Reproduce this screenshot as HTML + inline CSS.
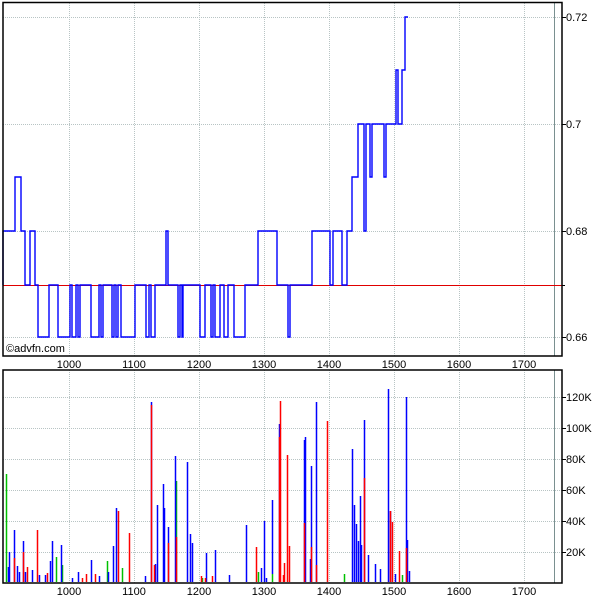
<!DOCTYPE html>
<html><head><meta charset="utf-8"><style>
html,body{margin:0;padding:0;background:#fff;width:600px;height:600px;overflow:hidden}
svg{display:block}
text{font-family:"Liberation Sans",sans-serif;font-size:11px;fill:#000}
</style></head><body>
<svg width="600" height="600" xmlns="http://www.w3.org/2000/svg">
<g stroke="#b8c4c4" stroke-width="1" stroke-dasharray="1,1">
<line x1="69.5" y1="3" x2="69.5" y2="356"/><line x1="134.5" y1="3" x2="134.5" y2="356"/><line x1="199.5" y1="3" x2="199.5" y2="356"/><line x1="264.5" y1="3" x2="264.5" y2="356"/><line x1="329.5" y1="3" x2="329.5" y2="356"/><line x1="394.5" y1="3" x2="394.5" y2="356"/><line x1="459.5" y1="3" x2="459.5" y2="356"/><line x1="524.5" y1="3" x2="524.5" y2="356"/>
<line x1="69.5" y1="370" x2="69.5" y2="583"/><line x1="134.5" y1="370" x2="134.5" y2="583"/><line x1="199.5" y1="370" x2="199.5" y2="583"/><line x1="264.5" y1="370" x2="264.5" y2="583"/><line x1="329.5" y1="370" x2="329.5" y2="583"/><line x1="394.5" y1="370" x2="394.5" y2="583"/><line x1="459.5" y1="370" x2="459.5" y2="583"/><line x1="524.5" y1="370" x2="524.5" y2="583"/>
<line x1="3" y1="17.5" x2="562" y2="17.5"/><line x1="3" y1="124.5" x2="562" y2="124.5"/><line x1="3" y1="231.5" x2="562" y2="231.5"/><line x1="3" y1="337.5" x2="562" y2="337.5"/>
<line x1="3" y1="397.5" x2="562" y2="397.5"/><line x1="3" y1="428.5" x2="562" y2="428.5"/><line x1="3" y1="459.5" x2="562" y2="459.5"/><line x1="3" y1="490.5" x2="562" y2="490.5"/><line x1="3" y1="521.5" x2="562" y2="521.5"/><line x1="3" y1="552.5" x2="562" y2="552.5"/>
</g>
<g stroke="#7a9090" stroke-width="1"><line x1="554.5" y1="3" x2="554.5" y2="356"/><line x1="554.5" y1="370" x2="554.5" y2="583"/></g>
<line x1="3" y1="285.5" x2="562" y2="285.5" stroke="#e00000" stroke-width="1"/>
<path fill="none" stroke="#0000ff" stroke-width="1.4" d="M3,285 V231 H6 V231 H15 V177 H21 V231 H25 V285 H30 V231 H35 V285 H38 V337 H49 V285 H58 V337 H70 V285 H72 V337 H76 V285 H78 V337 H80 V285 H91 V337 H99 V285 H101 V337 H103 V285 H112 V337 H114 V285 H116 V337 H118 V285 H121 V337 H135 V285 H146 V337 H149 V285 H151 V337 H155 V285 H166 V231 H168 V285 H178 V337 H180 V285 H182 V337 H183 V285 H200 V337 H205 V285 H211 V337 H213 V285 H215 V337 H220 V285 H224 V337 H228 V285 H234 V337 H245 V285 H258 V231 H277 V285 H288 V337 H290 V285 H312 V231 H330 V285 H333 V231 H342 V285 H347 V231 H352 V177 H358 V124 H364 V231 H366 V124 H370 V177 H372 V124 H375 V124 H384 V177 H386 V124 H396 V70 H398 V124 H402 V70 H405 V17 H408"/>
<g fill="none" stroke="#000" stroke-width="1.5">
<rect x="3" y="2.5" width="559" height="353.5"/>
<rect x="3" y="370" width="559" height="213"/>
</g>
<g stroke="#000" stroke-width="1">
<line x1="562" y1="17.5" x2="566" y2="17.5"/><line x1="562" y1="124.5" x2="566" y2="124.5"/><line x1="562" y1="231.5" x2="566" y2="231.5"/><line x1="562" y1="285.5" x2="565" y2="285.5"/><line x1="562" y1="337.5" x2="566" y2="337.5"/>
<line x1="562" y1="397.5" x2="566" y2="397.5"/><line x1="562" y1="428.5" x2="566" y2="428.5"/><line x1="562" y1="459.5" x2="566" y2="459.5"/><line x1="562" y1="490.5" x2="566" y2="490.5"/><line x1="562" y1="521.5" x2="566" y2="521.5"/><line x1="562" y1="552.5" x2="566" y2="552.5"/>
</g>
<g>
<text x="566" y="21">0.72</text><text x="566" y="128">0.7</text><text x="566" y="235">0.68</text><text x="566" y="341">0.66</text>
<text x="566" y="401">120K</text><text x="566" y="432">100K</text><text x="566" y="463">80K</text><text x="566" y="494">60K</text><text x="566" y="525">40K</text><text x="566" y="556">20K</text>
<text x="6" y="352" font-size="11">©advfn.com</text>
</g>
<g text-anchor="middle">
<text x="69" y="368">1000</text><text x="134" y="368">1100</text><text x="199" y="368">1200</text><text x="264" y="368">1300</text><text x="329" y="368">1400</text><text x="394" y="368">1500</text><text x="459" y="368">1600</text><text x="524" y="368">1700</text>
<text x="69" y="595">1000</text><text x="134" y="595">1100</text><text x="199" y="595">1200</text><text x="264" y="595">1300</text><text x="329" y="595">1400</text><text x="394" y="595">1500</text><text x="459" y="595">1600</text><text x="524" y="595">1700</text>
</g>
<g stroke-width="1.5">
<g stroke="#00c000"><line x1="6.5" y1="474" x2="6.5" y2="582"/><line x1="56.5" y1="557" x2="56.5" y2="582"/><line x1="62.5" y1="565" x2="62.5" y2="582"/><line x1="107.5" y1="561" x2="107.5" y2="582"/><line x1="122.5" y1="568" x2="122.5" y2="582"/><line x1="176.5" y1="481" x2="176.5" y2="582"/><line x1="202.5" y1="578" x2="202.5" y2="582"/><line x1="258.5" y1="572" x2="258.5" y2="582"/><line x1="272.5" y1="574" x2="272.5" y2="582"/><line x1="344.5" y1="574" x2="344.5" y2="582"/><line x1="402.5" y1="575" x2="402.5" y2="582"/></g>
<g stroke="#0000ff"><line x1="8.5" y1="567" x2="8.5" y2="582"/><line x1="9.5" y1="552" x2="9.5" y2="582"/><line x1="14.5" y1="530" x2="14.5" y2="582"/><line x1="17.5" y1="566" x2="17.5" y2="582"/><line x1="19.5" y1="572" x2="19.5" y2="582"/><line x1="23.5" y1="541" x2="23.5" y2="582"/><line x1="25.5" y1="572" x2="25.5" y2="582"/><line x1="32.5" y1="570" x2="32.5" y2="582"/><line x1="39.5" y1="575" x2="39.5" y2="582"/><line x1="45.5" y1="575" x2="45.5" y2="582"/><line x1="50.5" y1="561" x2="50.5" y2="582"/><line x1="52.5" y1="541" x2="52.5" y2="582"/><line x1="61.5" y1="545" x2="61.5" y2="582"/><line x1="72.5" y1="578" x2="72.5" y2="582"/><line x1="78.5" y1="572" x2="78.5" y2="582"/><line x1="91.5" y1="560" x2="91.5" y2="582"/><line x1="99.5" y1="576" x2="99.5" y2="582"/><line x1="108.5" y1="572" x2="108.5" y2="582"/><line x1="113.5" y1="546" x2="113.5" y2="582"/><line x1="116.5" y1="508" x2="116.5" y2="582"/><line x1="145.5" y1="576" x2="145.5" y2="582"/><line x1="151.5" y1="402" x2="151.5" y2="582"/><line x1="155.5" y1="564" x2="155.5" y2="582"/><line x1="157.5" y1="505" x2="157.5" y2="582"/><line x1="163.5" y1="484" x2="163.5" y2="582"/><line x1="164.5" y1="508" x2="164.5" y2="582"/><line x1="168.5" y1="527" x2="168.5" y2="582"/><line x1="175.5" y1="456" x2="175.5" y2="582"/><line x1="187.5" y1="462" x2="187.5" y2="582"/><line x1="190.5" y1="534" x2="190.5" y2="582"/><line x1="192.5" y1="543" x2="192.5" y2="582"/><line x1="206.5" y1="553" x2="206.5" y2="582"/><line x1="215.5" y1="550" x2="215.5" y2="582"/><line x1="229.5" y1="575" x2="229.5" y2="582"/><line x1="246.5" y1="525" x2="246.5" y2="582"/><line x1="261.5" y1="568" x2="261.5" y2="582"/><line x1="264.5" y1="521" x2="264.5" y2="582"/><line x1="266.5" y1="578" x2="266.5" y2="582"/><line x1="272.5" y1="500" x2="272.5" y2="574"/><line x1="279.5" y1="424" x2="279.5" y2="582"/><line x1="304.5" y1="440" x2="304.5" y2="582"/><line x1="305.5" y1="437" x2="305.5" y2="582"/><line x1="310.5" y1="559" x2="310.5" y2="582"/><line x1="311.5" y1="466" x2="311.5" y2="582"/><line x1="316.5" y1="402" x2="316.5" y2="582"/><line x1="352.5" y1="449" x2="352.5" y2="582"/><line x1="354.5" y1="505" x2="354.5" y2="582"/><line x1="356.5" y1="524" x2="356.5" y2="582"/><line x1="358.5" y1="541" x2="358.5" y2="582"/><line x1="360.5" y1="496" x2="360.5" y2="582"/><line x1="361.5" y1="545" x2="361.5" y2="582"/><line x1="364.5" y1="420" x2="364.5" y2="582"/><line x1="368.5" y1="555" x2="368.5" y2="582"/><line x1="375.5" y1="564" x2="375.5" y2="582"/><line x1="380.5" y1="569" x2="380.5" y2="582"/><line x1="388.5" y1="389" x2="388.5" y2="582"/><line x1="390.5" y1="511" x2="390.5" y2="582"/><line x1="395.5" y1="574" x2="395.5" y2="582"/><line x1="406.5" y1="397" x2="406.5" y2="582"/><line x1="407.5" y1="540" x2="407.5" y2="582"/><line x1="409.5" y1="571" x2="409.5" y2="582"/></g>
<g stroke="#ff0000"><line x1="14.5" y1="558" x2="14.5" y2="582"/><line x1="23.5" y1="552" x2="23.5" y2="582"/><line x1="27.5" y1="567" x2="27.5" y2="582"/><line x1="37.5" y1="530" x2="37.5" y2="582"/><line x1="47.5" y1="573" x2="47.5" y2="582"/><line x1="82.5" y1="578" x2="82.5" y2="582"/><line x1="86.5" y1="574" x2="86.5" y2="582"/><line x1="95.5" y1="574" x2="95.5" y2="582"/><line x1="118.5" y1="511" x2="118.5" y2="582"/><line x1="129.5" y1="533" x2="129.5" y2="582"/><line x1="151.5" y1="405" x2="151.5" y2="582"/><line x1="154.5" y1="565" x2="154.5" y2="582"/><line x1="168.5" y1="543" x2="168.5" y2="582"/><line x1="176.5" y1="537" x2="176.5" y2="582"/><line x1="201.5" y1="576" x2="201.5" y2="582"/><line x1="205.5" y1="578" x2="205.5" y2="582"/><line x1="212.5" y1="576" x2="212.5" y2="582"/><line x1="256.5" y1="547" x2="256.5" y2="582"/><line x1="279.5" y1="437" x2="279.5" y2="582"/><line x1="280.5" y1="401" x2="280.5" y2="582"/><line x1="283.5" y1="575" x2="283.5" y2="582"/><line x1="284.5" y1="563" x2="284.5" y2="582"/><line x1="287.5" y1="455" x2="287.5" y2="582"/><line x1="289.5" y1="546" x2="289.5" y2="582"/><line x1="304.5" y1="523" x2="304.5" y2="582"/><line x1="311.5" y1="547" x2="311.5" y2="582"/><line x1="316.5" y1="565" x2="316.5" y2="582"/><line x1="327.5" y1="421" x2="327.5" y2="582"/><line x1="364.5" y1="478" x2="364.5" y2="582"/><line x1="390.5" y1="511" x2="390.5" y2="582"/><line x1="392.5" y1="522" x2="392.5" y2="582"/><line x1="399.5" y1="551" x2="399.5" y2="582"/><line x1="406.5" y1="548" x2="406.5" y2="582"/></g>
</g>
</svg>
</body></html>
